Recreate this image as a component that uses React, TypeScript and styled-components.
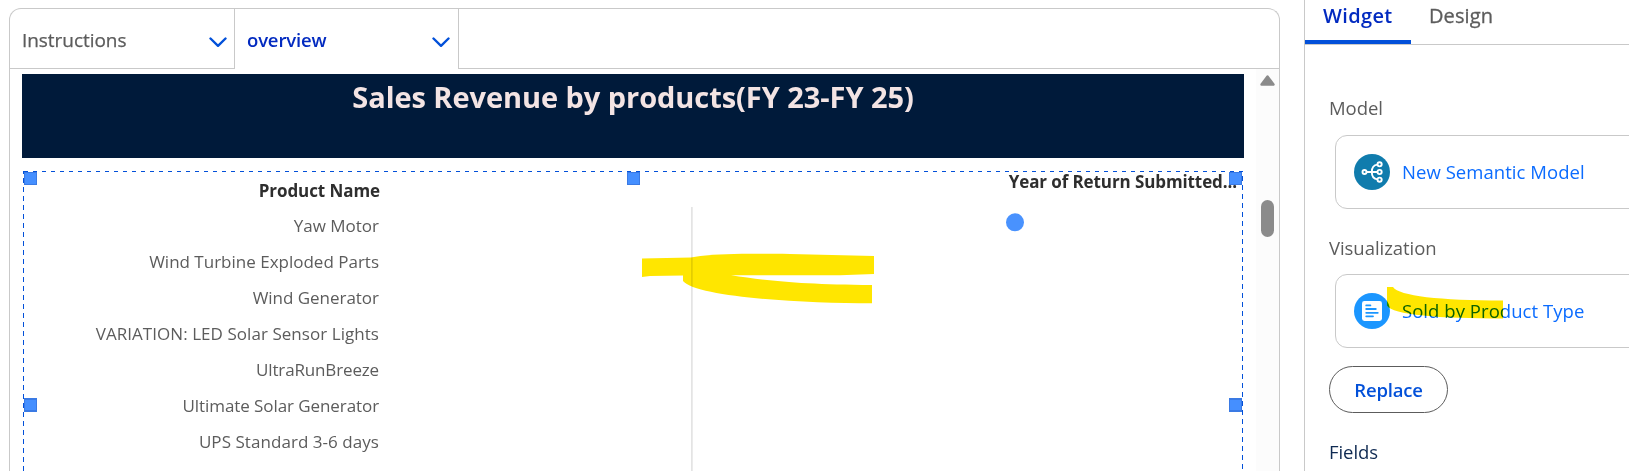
import React from 'react';
import styled, { createGlobalStyle } from 'styled-components';

const GlobalStyle = createGlobalStyle`
  * { box-sizing: border-box; }
  body {
    margin: 0;
    background: #fff;
    font-family: "Open Sans", "Noto Sans", sans-serif;
  }
`;

const border = '#c9c9c9';
const blue = '#0250d9';

const Page = styled.div`
  position: relative;
  display: flex;
  width: 1629px;
  height: 471px;
  overflow: hidden;
`;

const Workspace = styled.main`
  display: flex;
  flex-direction: column;
  width: 1271px;
  margin: 8px 24px 0 9px;
  border: 1px solid ${border};
  border-bottom: 0;
  border-radius: 12px 12px 0 0;
`;

const PageTabs = styled.nav`
  display: flex;
  flex: none;
  height: 60px;
`;

const PageTab = styled.div<{ $active?: boolean }>`
  display: flex;
  align-items: center;
  justify-content: space-between;
  width: ${p => (p.$active ? 224 : 225)}px;
  padding: ${p => (p.$active ? '2px 8px 1px 12px' : '2px 7px 0 12px')};
  border-right: 1px solid ${border};
  border-bottom: ${p => (p.$active ? '0' : `1px solid ${border}`)};
  color: ${p => (p.$active ? '#022ac0' : '#5c5c5c')};
  font-size: ${p => (p.$active ? 18.5 : 19)}px;
  font-weight: ${p => (p.$active ? 600 : 400)};
  letter-spacing: ${p => (p.$active ? -0.15 : -0.05)}px;
  -webkit-text-stroke: ${p => (p.$active ? 0 : 0.25)}px;

  svg { margin-top: 5px; }
`;

const TabFiller = styled.div`
  flex: 1;
  border-bottom: 1px solid ${border};
`;

const Body = styled.div`
  display: flex;
  flex: 1;
  min-height: 0;
`;

const Canvas = styled.section`
  flex: 1;
  padding: 5px 12px 0;
`;

const Banner = styled.h1`
  width: 1222px;
  height: 84px;
  margin: 0;
  padding-top: 3px;
  background: #001a3a;
  color: #f3e4e4;
  font-size: 29px;
  font-weight: 700;
  line-height: 40px;
  letter-spacing: -0.06px;
  text-align: center;
`;

const SelectedWidget = styled.div`
  position: relative;
  display: grid;
  grid-template-columns: 357px 1fr;
  width: 1220px;
  height: 300px;
  margin: 13px 0 0 1px;
  background:
    linear-gradient(90deg, ${blue} 4px, transparent 4px) 1px 0 / 9px 1px repeat-x,
    linear-gradient(180deg, ${blue} 5px, transparent 5px) 0 7px / 1px 9px repeat-y,
    linear-gradient(180deg, ${blue} 5px, transparent 5px) 100% 5px / 1px 9px repeat-y;
`;

const Handle = styled.span<{ $x: number; $y: number; $tall?: boolean }>`
  position: absolute;
  left: ${p => p.$x}px;
  top: ${p => p.$y}px;
  width: 13px;
  height: ${p => (p.$tall ? 14 : 13)}px;
  border: solid #3a7ae4;
  border-width: ${p => (p.$tall ? '2px 1px' : '1px')};
  background: #458fff;
`;

const Labels = styled.div`
  display: flex;
  flex-direction: column;
  padding-top: 1px;
  text-align: right;
  font-size: 17px;
  line-height: 36px;
`;

const ColumnTitle = styled.div`
  height: 36px;
  color: #2e2e2e;
  font-weight: 700;
  line-height: 38px;
  letter-spacing: -0.08px;
`;

const Label = styled.div<{ $tracking: number }>`
  padding-right: 1px;
  color: #5c5c5c;
  letter-spacing: ${p => p.$tracking}px;
`;

const Plot = styled.div`
  display: flex;
  flex-direction: column;
`;

const PlotTitle = styled.div`
  padding-right: 6px;
  color: #2e2e2e;
  font-size: 17px;
  font-weight: 700;
  line-height: 21px;
  letter-spacing: -0.1px;
  text-align: right;
`;

const Scrollbar = styled.div`
  display: flex;
  flex-direction: column;
  align-items: center;
  width: 23px;
  padding-top: 6px;
  background: #fcfcfc;
`;

const Thumb = styled.div`
  width: 13px;
  height: 37px;
  margin-top: 114px;
  border-radius: 7px;
  background: #8b8b8b;
`;

const Inspector = styled.aside`
  flex: 1;
  border-left: 1px solid ${border};
`;

const InspectorTabs = styled.nav`
  display: flex;
  height: 45px;
  border-bottom: 1px solid ${border};
`;

const InspectorTab = styled.div<{ $active?: boolean }>`
  height: 44px;
  padding: ${p => (p.$active ? '0 18px' : '0 18px')};
  width: ${p => (p.$active ? '106px' : 'auto')};
  border-bottom: ${p => (p.$active ? `4px solid ${blue}` : '0')};
  color: ${p => (p.$active ? '#022ac0' : '#5c5c5c')};
  font-size: 20px;
  font-weight: ${p => (p.$active ? 600 : 500)};
  letter-spacing: ${p => (p.$active ? 0.35 : 0.1)}px;
  line-height: 31px;
  -webkit-text-stroke: ${p => (p.$active ? 0 : 0.3)}px;
`;

const InspectorBody = styled.div`
  padding: 51px 0 0 24px;
`;

const FieldLabel = styled.div<{ $dark?: boolean }>`
  color: ${p => (p.$dark ? '#0f2a52' : '#5c5c5c')};
  font-size: 18.5px;
  line-height: 24px;
  letter-spacing: -0.05px;
`;

const ResourceCard = styled.div<{ $before: number; $after: number }>`
  display: flex;
  align-items: center;
  gap: 12px;
  width: 400px;
  height: 74px;
  margin: ${p => p.$before}px 0 ${p => p.$after}px 6px;
  padding-left: 18px;
  border: 1px solid ${border};
  border-radius: 12px;
  color: #0b6cff;
  font-size: 18.5px;
  letter-spacing: 0.05px;

  svg { flex: none; }
`;

const ResourceName = styled.span`
  padding-bottom: 2px;
`;

const ReplaceButton = styled.button`
  display: block;
  width: 119px;
  height: 47px;
  margin: 0 0 27px;
  padding: 0;
  border: 1px solid #5c5c5c;
  border-radius: 24px;
  background: #fff;
  color: ${blue};
  font-family: inherit;
  font-size: 18.5px;
  font-weight: 600;
  letter-spacing: -0.2px;
`;

const Marker = styled.svg`
  position: absolute;
  left: 0;
  top: 0;
  mix-blend-mode: multiply;
  pointer-events: none;
`;

const Chevron = () => (
  <svg width="18" height="11" viewBox="0 0 18 11" fill="none">
    <path d="M1.5 1.5 9 8.8l7.5-7.3" stroke={blue} strokeWidth="2.4" strokeLinecap="round" strokeLinejoin="round" />
  </svg>
);

const ModelIcon = () => (
  <svg width="36" height="36" viewBox="0 0 36 36" fill="none">
    <circle cx="18" cy="18" r="18" fill="#107cad" />
    <g stroke="#fff" strokeWidth="1.9">
      <circle cx="10.5" cy="18" r="2" />
      <circle cx="25.6" cy="10.3" r="2.1" />
      <circle cx="25.6" cy="18" r="2.1" />
      <circle cx="25.6" cy="25.7" r="2.1" />
      <path d="M12.5 18H23.5M23.5 10.6C19.5 11 17.8 13.4 17.8 18s1.7 7 5.7 7.4" />
    </g>
  </svg>
);

const VisualizationIcon = () => (
  <svg width="36" height="36" viewBox="0 0 36 36" fill="none">
    <circle cx="18" cy="18" r="18" fill="#1b96ff" />
    <rect x="8" y="8" width="20" height="20" rx="2.4" fill="#fff" />
    <path d="M12.2 12.4h4.2M12.2 16h9.6M12.2 19.8h11.6M12.2 23.3h6.8" stroke="#1b96ff" strokeWidth="1.8" strokeLinecap="round" />
  </svg>
);

const products: { name: string; tracking: number }[] = [
  { name: 'Yaw Motor', tracking: 0 },
  { name: 'Wind Turbine Exploded Parts', tracking: 0 },
  { name: 'Wind Generator', tracking: -0.03 },
  { name: 'VARIATION: LED Solar Sensor Lights', tracking: 0.05 },
  { name: 'UltraRunBreeze', tracking: -0.15 },
  { name: 'Ultimate Solar Generator', tracking: -0.08 },
  { name: 'UPS Standard 3-6 days', tracking: 0.05 },
];

export default function App() {
  return (
    <>
      <GlobalStyle />
      <Page>
        <Workspace>
          <PageTabs>
            <PageTab>Instructions<Chevron /></PageTab>
            <PageTab $active>overview<Chevron /></PageTab>
            <TabFiller />
          </PageTabs>
          <Body>
            <Canvas>
              <Banner>Sales Revenue by products(FY 23-FY 25)</Banner>
              <SelectedWidget>
                <Labels>
                  <ColumnTitle>Product Name</ColumnTitle>
                  {products.map(p => (
                    <Label key={p.name} $tracking={p.tracking}>{p.name}</Label>
                  ))}
                </Labels>
                <Plot>
                  <PlotTitle>Year of Return Submitted...</PlotTitle>
                  <svg width="863" height="279" viewBox="0 0 863 279">
                    <path d="M311.9 15V279" stroke="#e2e2e2" strokeWidth="1.6" />
                    <circle cx="635" cy="30.3" r="9" fill="#4992fe" />
                  </svg>
                </Plot>
                <Handle $x={1} $y={1} />
                <Handle $x={604} $y={1} />
                <Handle $x={1206} $y={1} />
                <Handle $x={1} $y={227} $tall />
                <Handle $x={1206} $y={227} $tall />
              </SelectedWidget>
            </Canvas>
            <Scrollbar>
              <svg width="15" height="11" viewBox="0 0 15 11">
                <path d="M7.5 1.5 13.5 9.5H1.5Z" fill="#8b8b8b" stroke="#8b8b8b" strokeWidth="2.4" strokeLinejoin="round" />
              </svg>
              <Thumb />
            </Scrollbar>
          </Body>
        </Workspace>
        <Inspector>
          <InspectorTabs>
            <InspectorTab $active>Widget</InspectorTab>
            <InspectorTab>Design</InspectorTab>
          </InspectorTabs>
          <InspectorBody>
            <FieldLabel>Model</FieldLabel>
            <ResourceCard $before={15} $after={27}>
              <ModelIcon />
              <ResourceName>New Semantic Model</ResourceName>
            </ResourceCard>
            <FieldLabel>Visualization</FieldLabel>
            <ResourceCard $before={14} $after={18}>
              <VisualizationIcon />
              <ResourceName>Sold by Product Type</ResourceName>
            </ResourceCard>
            <ReplaceButton>Replace</ReplaceButton>
            <FieldLabel $dark>Fields</FieldLabel>
          </InspectorBody>
        </Inspector>
        <Marker width="1629" height="471" viewBox="0 0 1629 471" fill="#ffe600">
          <path d="M642 258.6 691 257.4C712 253.6 745 253.6 790 254L874 256V274L840 275.3H731C765 280.5 800 284.5 872 285V303.2C800 303.2 696 297 683 281V275.6L650 276 642 277Z" />
          <path d="M1387 287H1393C1399 296 1440 300.5 1503 300.5V318.5C1440 318.5 1392 315 1387 305.5Z" />
        </Marker>
      </Page>
    </>
  );
}
